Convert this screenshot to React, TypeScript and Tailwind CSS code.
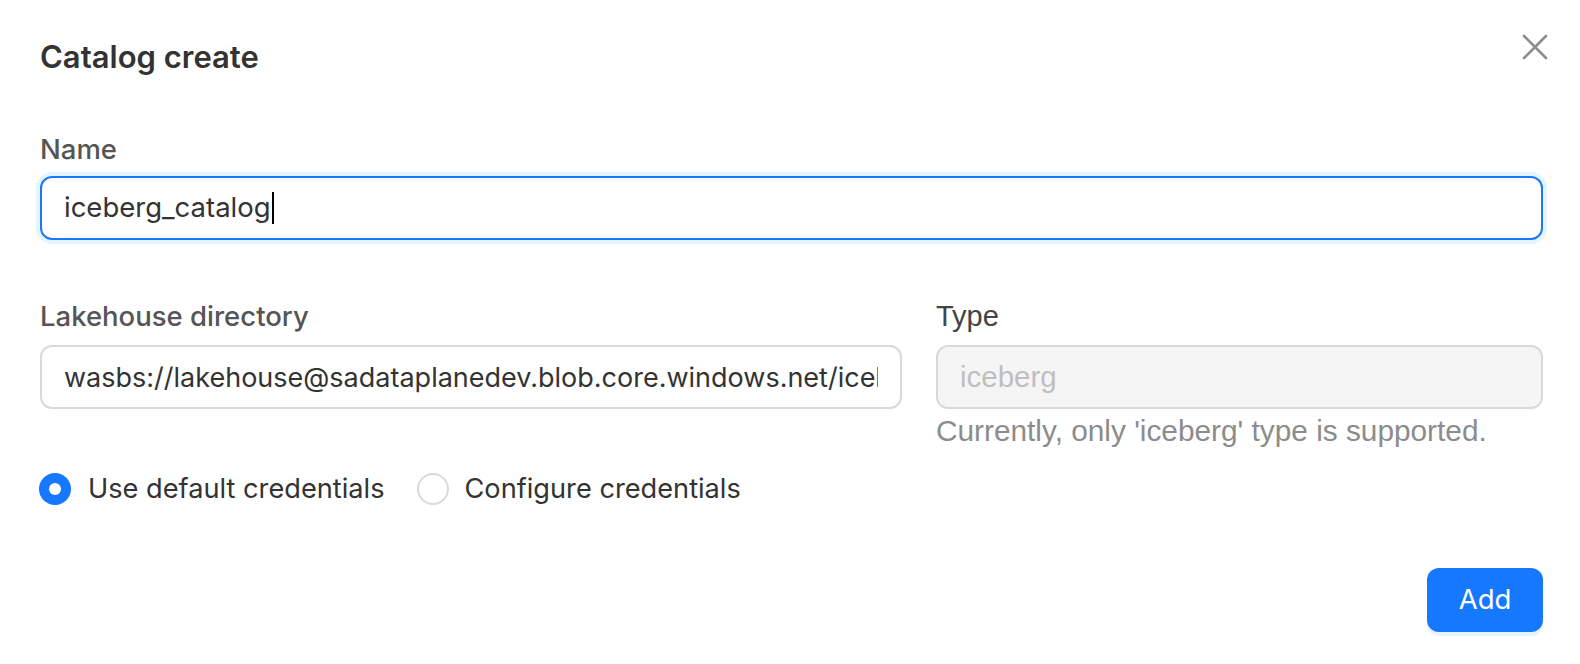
import React from 'react';

const App: React.FC = () => {
  return (
    <div className="relative min-h-screen w-full bg-white font-['Inter',sans-serif] text-[#333]">
      {/* Close button */}
      <button className="absolute left-[1522px] top-[34px] w-[26px] h-[26px] flex items-center justify-center">
        <svg width="26" height="26" viewBox="0 0 26 26" fill="none" stroke="#8c8c8c" strokeWidth="2.6" strokeLinecap="round">
          <path d="M2 2 L24 24 M24 2 L2 24" />
        </svg>
      </button>

      <div className="pl-[40px] pr-[37px] pt-[35px] flex flex-col">
        {/* Title */}
        <h2 className="text-[31px] leading-[44px] font-semibold text-[#333]">Catalog create</h2>

        {/* Name */}
        <label className="mt-[48px] text-[27.5px] leading-[44px] font-medium text-[#555]">Name</label>
        <div className="mt-[5px] h-[64px] rounded-[12px] border-2 border-[#1677ff] shadow-[0_0_0_4px_rgba(5,145,255,0.1)] px-[22px] flex items-center">
          <span className="text-[27.5px] text-[#333]">iceberg_catalog</span>
          <span className="w-[2px] h-[32px] bg-black ml-[1px]" />
        </div>

        {/* Lakehouse directory + Type */}
        <div className="mt-[54px] grid grid-cols-[862px_1fr] gap-x-[34px]">
          <div className="flex flex-col">
            <label className="text-[27.5px] leading-[44px] font-medium text-[#555]">Lakehouse directory</label>
            <input
              readOnly
              value="wasbs://lakehouse@sadataplanedev.blob.core.windows.net/iceberg_catalog"
              className="mt-[7px] h-[64px] w-full rounded-[12px] border-2 border-[#d9d9d9] px-[22px] text-[27px] text-[#333] outline-none font-['Inter',sans-serif]"
            />
          </div>
          <div className="flex flex-col">
            <label className="text-[29px] leading-[44px] font-['Liberation_Sans',sans-serif] text-[#444]">Type</label>
            <div className="mt-[7px] h-[64px] rounded-[12px] border-2 border-[#d9d9d9] bg-[#f5f5f5] px-[22px] flex items-center">
              <span className="text-[29.5px] font-['Liberation_Sans',sans-serif] text-[#bfbfbf]">iceberg</span>
            </div>
            <p className="text-[29.8px] leading-[44px] font-['Liberation_Sans',sans-serif] text-[#8c8c8c]">
              Currently, only 'iceberg' type is supported.
            </p>
          </div>
        </div>

        {/* Credentials radio group */}
        <div className="mt-[14px] h-[44px] flex items-center">
          <label className="flex items-center">
            <span className="w-[32px] h-[32px] rounded-full bg-[#1677ff] flex items-center justify-center -ml-[1px]">
              <span className="w-[12px] h-[12px] rounded-full bg-white" />
            </span>
            <span className="ml-[17px] text-[27.2px] text-[#333]">Use default credentials</span>
          </label>
          <label className="flex items-center ml-[32px]">
            <span className="w-[32px] h-[32px] rounded-full border-2 border-[#d9d9d9] bg-white" />
            <span className="ml-[16px] text-[27.2px] text-[#333]">Configure credentials</span>
          </label>
        </div>

        {/* Footer */}
        <div className="mt-[57px] flex justify-end">
          <button className="w-[116px] h-[64px] rounded-[12px] bg-[#1677ff] text-white text-[27.5px] shadow-[0_4px_0_rgba(5,145,255,0.1)]">
            Add
          </button>
        </div>
      </div>
    </div>
  );
};

export default App;
